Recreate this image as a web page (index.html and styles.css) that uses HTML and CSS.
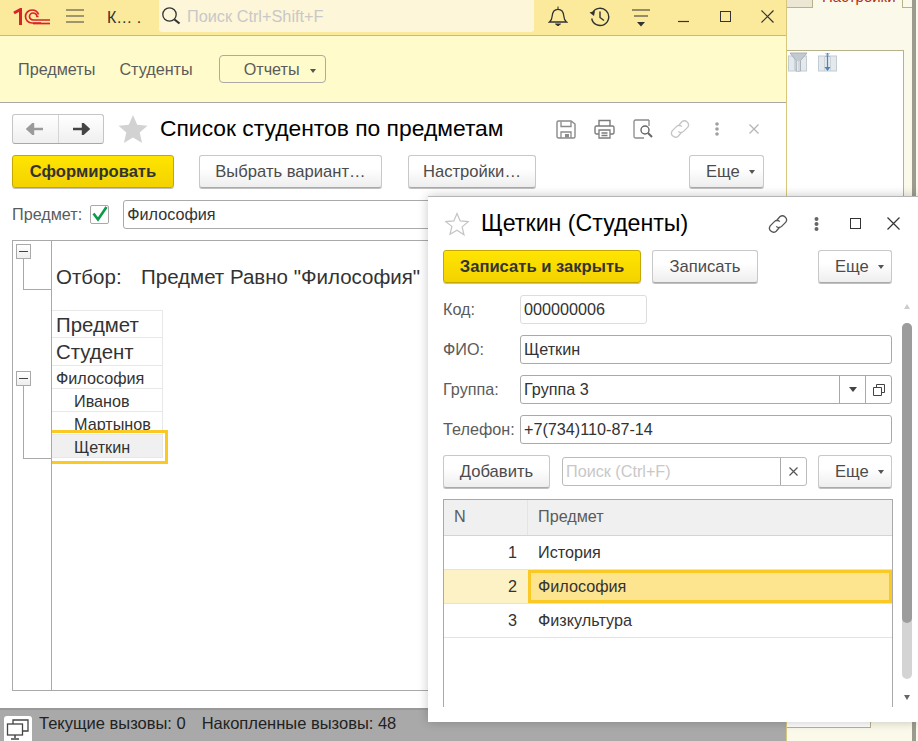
FILE: index.html
```html
<!DOCTYPE html>
<html>
<head>
    <meta charset="utf-8">
    <title>Список студентов по предметам</title>
    <link rel="stylesheet" href="styles.css">
</head>
<body>
    <div class="desk">
        <div class="back-panel">
            <div class="back-tabs">
                <span class="back-tab-old"></span>
                <span class="back-tab"><span class="back-tab-text">Настройки</span></span>
                <span class="back-tab-rest"></span>
            </div>
            <div class="back-box">
                <svg class="back-icon" width="20" height="20" viewBox="0 0 20 20">
                    <rect x="0.5" y="4" width="18" height="15" fill="#e4e9ed" stroke="#c3ccd3"/>
                    <path d="M6.5 4v15M12.5 4v15" stroke="#ccd5dc"/>
                    <path d="M2 1h17l-6.500 7.500V19H8V8.500z" fill="#c2cacf" stroke="#a9b2b8"/>
                    <path d="M9.500 9v10M11 9v10" stroke="#e4e9ed"/>
                </svg>
                <svg class="back-icon" width="20" height="20" viewBox="0 0 20 20">
                    <rect x="0.5" y="4" width="18" height="15" fill="#e4e9ed" stroke="#c3ccd3"/>
                    <path d="M6.5 4v15M12.5 4v15" stroke="#ccd5dc"/>
                    <path d="M9.500 1v16" stroke="#4d83ba" stroke-width="1.200"/>
                    <path d="M6.500 15h6l-3 4z" fill="#4d83ba"/>
                    <path d="M7.500 1l4 4M11.500 1l-4 4" stroke="#7aa3cc"/>
                </svg>
            </div>
            <div class="back-low"></div>
            <div class="back-strip"></div>
        </div>

        <div class="main-window">
            <div class="topbar">
                <svg class="logo" width="38" height="18" viewBox="0 0 38 18">
                    <path d="M1 5l6.500-3.500V17" fill="none" stroke="#d8232a" stroke-width="3"/>
                    <path d="M28 15H19a6.500 6.500 0 1 1 0-13c3.400 0 5.500 1.600 6.500 4.500" fill="none" stroke="#d8232a" stroke-width="1.700"/>
                    <path d="M37 12H20a3.500 3.500 0 1 1 0-7c2 0 3.500 1 4 3.500h1.500" fill="none" stroke="#d8232a" stroke-width="1.700"/>
                    <path d="M20 15.500h17" stroke="#d8232a" stroke-width="1.700"/>
                </svg>
                <svg class="burger" width="18" height="14" viewBox="0 0 18 14">
                    <path d="M0 1h18M0 7h18M0 13h18" stroke="#444" stroke-width="1.200"/>
                </svg>
                <span class="top-title">К… .</span>
                <div class="global-search">
                    <svg width="20" height="20" viewBox="0 0 20 20">
                        <circle cx="8.500" cy="8.500" r="6.700" fill="none" stroke="#333" stroke-width="1.300"/>
                        <path d="M13.500 13.500l5 4" stroke="#333" stroke-width="2.200"/>
                    </svg>
                    <span class="global-search-text">Поиск Ctrl+Shift+F</span>
                </div>
                <div class="top-icons">
                    <svg class="top-icon-bell" width="20" height="20" viewBox="0 0 20 20">
                        <path d="M1.500 16c2-1.500 2.500-3 2.700-6 .3-4 2.300-6.700 5.800-6.700s5.500 2.700 5.800 6.700c.2 3 .7 4.500 2.700 6z" fill="none" stroke="#333" stroke-width="1.300"/>
                        <path d="M10 0.500v3M7.500 18h5l-2.500 1.800z" stroke="#333" fill="#333"/>
                    </svg>
                    <svg class="top-icon-history" width="22" height="20" viewBox="0 0 22 20">
                        <path d="M3.500 6a8.600 8.600 0 1 1-.8 5.500" fill="none" stroke="#333" stroke-width="1.400"/>
                        <path d="M0.500 5.500l5.500-1.500-1 5z" fill="#333"/>
                        <path d="M11 4.500v6l4 3" fill="none" stroke="#333" stroke-width="1.400"/>
                    </svg>
                    <svg class="top-icon-filter" width="20" height="18" viewBox="0 0 20 18">
                        <path d="M1 1h18M3 7h14" stroke="#333" stroke-width="1.200"/>
                        <path d="M6 13h8l-4 4.500z" fill="#333"/>
                    </svg>
                    <svg class="top-icon-min" width="12" height="12" viewBox="0 0 12 12">
                        <path d="M0 10.500h11" stroke="#333" stroke-width="1.200"/>
                    </svg>
                    <span class="top-icon-max"></span>
                    <svg class="top-icon-close" width="13" height="13" viewBox="0 0 13 13">
                        <path d="M.5.500l12 12M12.500.500l-12 12" stroke="#333" stroke-width="1.200"/>
                    </svg>
                </div>
            </div>

            <div class="sections">
                <a class="section-link">Предметы</a>
                <a class="section-link">Студенты</a>
                <div class="section-btn">Отчеты <span class="caret"></span></div>
            </div>

            <div class="form">
                <div class="form-head">
                    <div class="nav-btns">
                        <span class="nav-btn">
                            <svg width="18" height="12" viewBox="0 0 18 12"><path d="M17 6H6M7 1L1.500 6 7 11z" stroke="#9a9a9a" stroke-width="2.400" fill="#9a9a9a"/></svg>
                        </span>
                        <span class="nav-btn">
                            <svg width="18" height="12" viewBox="0 0 18 12"><path d="M1 6h11M11 1l5.500 5L11 11z" stroke="#444" stroke-width="2.400" fill="#444"/></svg>
                        </span>
                    </div>
                    <svg class="fav" width="30" height="30" viewBox="0 0 30 30">
                        <path d="M15 1l4.200 9.800 10.300.9-7.800 6.800 2.400 10.400L15 23.400 5.900 28.900l2.400-10.400L.5 11.700l10.300-.9z" fill="#d2d2d2"/>
                    </svg>
                    <h1 class="form-title">Список студентов по предметам</h1>
                    <div class="form-icons">
                        <svg width="20" height="19" viewBox="0 0 20 19">
                            <path d="M1 2.500A1.500 1.500 0 0 1 2.500 1H15l4 3v12.500a1.500 1.500 0 0 1-1.500 1.500h-15A1.500 1.500 0 0 1 1 16.500z" fill="none" stroke="#8a8a8a" stroke-width="1.400"/>
                            <path d="M5 1.500v5h10v-5M5 18v-6h10v6" fill="none" stroke="#8a8a8a" stroke-width="1.300"/>
                            <rect x="9" y="14" width="4" height="3.500" fill="#8a8a8a"/>
                        </svg>
                        <svg width="21" height="20" viewBox="0 0 21 20">
                            <path d="M5 7V1.500h11V7M5 15H2.500A1.500 1.500 0 0 1 1 13.500V8.500A1.500 1.500 0 0 1 2.500 7h16A1.500 1.500 0 0 1 20 8.500v5a1.500 1.500 0 0 1-1.500 1.500H16" fill="none" stroke="#7c7c7c" stroke-width="1.400"/>
                            <path d="M5 11h11v8H5zM7.500 14h6M7.500 16.500h6" fill="none" stroke="#7c7c7c" stroke-width="1.300"/>
                        </svg>
                        <svg width="20" height="20" viewBox="0 0 20 20">
                            <path d="M16 1H2.500A1.500 1.500 0 0 0 1 2.500v15A1.500 1.500 0 0 0 2.500 19H11" fill="none" stroke="#8a8a8a" stroke-width="1.300"/>
                            <path d="M16 1v6" stroke="#8a8a8a" stroke-width="1.300"/>
                            <circle cx="12" cy="11" r="4" fill="none" stroke="#666" stroke-width="1.400"/>
                            <path d="M15 14l4 4" stroke="#666" stroke-width="2"/>
                        </svg>
                        <svg class="form-icon-link" width="24" height="24" viewBox="0 0 20 20">
                            <path d="M8.500 7.500l3-3.500a3.400 3.400 0 0 1 5 4.500l-3.500 3.500a3.200 3.200 0 0 1-4.500 0M11.500 12.500l-3 3.500a3.400 3.400 0 0 1-5-4.500L7 8a3.200 3.200 0 0 1 4.500 0" fill="none" stroke="#c4c4c4" stroke-width="1.100"/>
                        </svg>
                        <svg class="form-icon-dots" width="4" height="14" viewBox="0 0 4 14">
                            <circle cx="2" cy="2" r="1.800" fill="#a0a0a0"/><circle cx="2" cy="7" r="1.800" fill="#a0a0a0"/><circle cx="2" cy="12" r="1.800" fill="#a0a0a0"/>
                        </svg>
                        <svg class="form-icon-close" width="10" height="10" viewBox="0 0 10 10">
                            <path d="M.5.500l9 9M9.500.500l-9 9" stroke="#b5b5b5" stroke-width="1.300"/>
                        </svg>
                    </div>
                </div>

                <div class="form-bar">
                    <button class="btn btn-main btn-make">Сформировать</button>
                    <button class="btn btn-variant">Выбрать вариант…</button>
                    <button class="btn btn-settings">Настройки…</button>
                    <button class="btn btn-more">Еще <span class="caret"></span></button>
                </div>

                <div class="filter-row">
                    <span class="label">Предмет:</span>
                    <span class="check">
                        <svg width="17" height="17" viewBox="0 0 17 17"><path d="M2.500 7.500l4.500 6L15.500 1" fill="none" stroke="#0d9a4d" stroke-width="2.600"/></svg>
                    </span>
                    <span class="input filter-input">Философия</span>
                </div>

                <div class="report">
                    <div class="tree">
                        <span class="tree-box tree-box-a"></span>
                        <span class="tree-line tree-line-a"></span>
                        <span class="tree-box tree-box-b"></span>
                        <span class="tree-line tree-line-b"></span>
                    </div>
                    <div class="sheet">
                        <div class="sheet-filter"><span class="sheet-filter-name">Отбор:</span>Предмет Равно "Философия"</div>
                        <div class="sheet-table">
                            <div class="cell cell-head">Предмет</div>
                            <div class="cell cell-head">Студент</div>
                            <div class="cell">Философия</div>
                            <div class="cell cell-sub">Иванов</div>
                            <div class="cell cell-sub">Мартынов</div>
                            <div class="cell cell-sub cell-current">Щеткин</div>
                            <span class="cell-frame"></span>
                        </div>
                    </div>
                </div>
            </div>
        </div>

        <div class="status">
            <span class="status-btn">
                <svg width="24" height="22" viewBox="0 0 24 22">
                    <path d="M7 6V2h15v11h-5" fill="none" stroke="#444" stroke-width="1.300"/>
                    <rect x="1.500" y="6" width="15" height="11" fill="#fff" stroke="#444" stroke-width="1.300"/>
                    <path d="M9 17v3M5 21h8" stroke="#444" stroke-width="1.500"/>
                </svg>
            </span>
            <span class="status-text">Текущие вызовы: 0</span>
            <span class="status-text">Накопленные вызовы: 48</span>
        </div>

        <div class="modal">
            <div class="modal-head">
                <svg class="modal-star" width="24" height="24" viewBox="0 0 24 24">
                    <path d="M12 1.500l3.200 7.400 8 .7-6.100 5.300 1.900 7.900L12 18.200l-7 4.100 1.900-7.900L.8 9.600l8-.7z" fill="none" stroke="#c4c4c4" stroke-width="1.200"/>
                </svg>
                <h2 class="modal-title">Щеткин (Студенты)</h2>
                <div class="modal-icons">
                    <svg width="24" height="24" viewBox="0 0 20 20">
                        <path d="M8.500 7.500l3-3.500a3.400 3.400 0 0 1 5 4.500l-3.500 3.500a3.200 3.200 0 0 1-4.500 0M11.500 12.500l-3 3.500a3.400 3.400 0 0 1-5-4.500L7 8a3.200 3.200 0 0 1 4.500 0" fill="none" stroke="#555" stroke-width="1.100"/>
                    </svg>
                    <svg width="5" height="14" viewBox="0 0 5 14">
                        <circle cx="2.500" cy="2" r="2" fill="#666"/><circle cx="2.500" cy="7" r="2" fill="#666"/><circle cx="2.500" cy="12" r="2" fill="#666"/>
                    </svg>
                    <span class="modal-max"></span>
                    <svg width="13" height="13" viewBox="0 0 13 13">
                        <path d="M.5.500l12 12M12.500.500l-12 12" stroke="#333" stroke-width="1.200"/>
                    </svg>
                </div>
            </div>

            <div class="modal-bar">
                <button class="btn btn-main btn-save-close">Записать и закрыть</button>
                <button class="btn btn-save">Записать</button>
                <button class="btn btn-more">Еще <span class="caret"></span></button>
            </div>

            <div class="fields">
                <span class="label">Код:</span>
                <span class="input input-code">000000006</span>
                <span class="label">ФИО:</span>
                <span class="input">Щеткин</span>
                <span class="label">Группа:</span>
                <div class="input input-group">
                    <span class="input-group-text">Группа 3</span>
                    <span class="input-addon"><span class="caret caret-dark"></span></span>
                    <span class="input-addon">
                        <svg width="12" height="12" viewBox="0 0 12 12"><path d="M3.500 3.500V.5h8v8h-3M.5 3.500h8v8h-8z" fill="none" stroke="#444"/></svg>
                    </span>
                </div>
                <span class="label">Телефон:</span>
                <span class="input">+7(734)110-87-14</span>
            </div>

            <div class="table-bar">
                <button class="btn btn-add">Добавить</button>
                <div class="input table-search">
                    <span class="table-search-text">Поиск (Ctrl+F)</span>
                    <span class="input-addon table-search-clear">
                        <svg width="9" height="9" viewBox="0 0 9 9"><path d="M.5.500l8 8M8.500.500l-8 8" stroke="#555" stroke-width="1.200"/></svg>
                    </span>
                </div>
                <button class="btn btn-more">Еще <span class="caret"></span></button>
            </div>

            <div class="grid">
                <div class="grid-row grid-head">
                    <div class="grid-n">N</div>
                    <div class="grid-name">Предмет</div>
                </div>
                <div class="grid-row">
                    <div class="grid-n grid-num">1</div>
                    <div class="grid-name">История</div>
                </div>
                <div class="grid-row grid-row-current">
                    <div class="grid-n grid-num">2</div>
                    <div class="grid-name">Философия</div>
                </div>
                <div class="grid-row">
                    <div class="grid-n grid-num">3</div>
                    <div class="grid-name">Физкультура</div>
                </div>
            </div>

            <div class="scroll">
                <span class="scroll-up"></span>
                <div class="scroll-track"><div class="scroll-thumb"></div></div>
                <span class="scroll-down"></span>
            </div>
        </div>
    </div>
</body>
</html>
```

FILE: styles.css
```css
* {
    box-sizing: border-box;
}
html, body {
    margin: 0;
    height: 100%;
}
body {
    font-family: "Liberation Sans", Arial, sans-serif;
    font-size: 16.2px;
    color: #4b4b4b;
    overflow: hidden;
}
svg {
    flex: none;
}
.desk {
    position: relative;
    width: 918px;
    height: 741px;
    overflow: hidden;
    background: #fbf9ea;
}

/* window behind, only its right edge is seen */
.back-panel {
    position: absolute;
    left: 786px;
    top: 0;
    width: 132px;
    height: 741px;
    border-left: 1px solid #d8c87e;
}
.back-tabs {
    display: flex;
    height: 8px;
}
.back-tab-old {
    width: 25px;
    background: #ece7d5;
    border-bottom: 1px solid #b7b28a;
}
.back-tab {
    width: 91px;
    padding-left: 9px;
    border-left: 1px solid #b7b28a;
    border-right: 1px solid #b7b28a;
    color: #b03020;
    font-size: 15px;
    white-space: nowrap;
}
.back-tab-text {
    display: block;
    margin-top: -10px;
    line-height: 14px;
}
.back-tab-rest {
    width: 9px;
    border-bottom: 1px solid #b7b28a;
}
.back-box {
    display: flex;
    gap: 10px;
    width: 117px;
    height: 160px;
    margin-top: 42px;
    padding: 1px 0 0 1px;
    background: #fff;
    border: 1px solid #b7b28a;
    border-left: 0;
}
.back-icon {
    display: block;
}
.back-low {
    width: 84px;
    height: 28px;
    margin-top: 490px;
    background: #fff;
    border: 1px solid #b7b28a;
    border-left: 0;
}
.back-strip {
    position: absolute;
    left: 125px;
    top: 0;
    width: 4px;
    height: 741px;
    background: #9b9b90;
}

.main-window {
    position: absolute;
    left: 0;
    top: 0;
    width: 786px;
    height: 708px;
    display: flex;
    flex-direction: column;
    background: #fff;
}

.topbar {
    position: relative;
    display: flex;
    align-items: flex-start;
    height: 36px;
    flex: none;
    background: #fbe99c;
    border-bottom: 1px solid #c9bb73;
}
.logo {
    margin: 8px 0 0 13px;
}
.burger {
    margin: 9px 0 0 15px;
}
.top-title {
    width: 52px;
    margin: 8px 0 0 23px;
    font-size: 16px;
    color: #333;
    line-height: 19px;
    white-space: pre;
}
.global-search {
    display: flex;
    align-items: center;
    gap: 6px;
    width: 375px;
    height: 32px;
    padding-left: 2px;
    background: #fdf6d9;
    border-radius: 0 0 3px 3px;
}
.global-search-text {
    color: #c8c8c8;
    font-size: 16.3px;
}
.top-icons {
    position: relative;
    flex: 1;
    height: 35px;
}
.top-icons > * {
    position: absolute;
}
.top-icon-bell { left: 14px; top: 6px; }
.top-icon-history { left: 55px; top: 7px; }
.top-icon-filter { left: 97px; top: 9px; }
.top-icon-min { left: 144px; top: 11px; }
.top-icon-max {
    left: 186px;
    top: 11px;
    width: 11px;
    height: 11px;
    border: 1px solid #333;
}
.top-icon-close { left: 227px; top: 10px; }

.sections {
    display: flex;
    align-items: center;
    height: 67px;
    flex: none;
    padding-left: 18px;
    background: #fffbcb;
    border-bottom: 1px solid #a9a9a9;
}
.section-link {
    margin-right: 24px;
    color: #5b5b5b;
}
.section-btn {
    width: 107px;
    height: 28px;
    margin-left: 2px;
    padding-left: 24px;
    line-height: 26px;
    border: 1px solid #aaa;
    border-radius: 4px;
    color: #5b5b5b;
    white-space: nowrap;
}
.caret {
    display: inline-block;
    margin-left: 6px;
    vertical-align: middle;
    border-left: 3.5px solid transparent;
    border-right: 3.5px solid transparent;
    border-top: 4px solid #555;
}
.caret-dark {
    margin: 0;
    border-left-width: 4px;
    border-right-width: 4px;
    border-top-width: 5px;
    border-top-color: #444;
}

.form {
    position: relative;
    flex: 1;
    padding: 11px 22px 0 12px;
}
.form-head {
    display: flex;
    align-items: center;
    height: 30px;
}
.nav-btns {
    display: flex;
    width: 92px;
    height: 30px;
    flex: none;
    border: 1px solid #c5c5c5;
    border-bottom-color: #a8a8a8;
    border-radius: 3px;
    background: linear-gradient(#fff, #efefef);
}
.nav-btn {
    display: flex;
    align-items: center;
    justify-content: center;
    flex: 1;
}
.nav-btn + .nav-btn {
    border-left: 1px solid #d5d5d5;
}
.fav {
    margin-left: 14px;
}
.form-title {
    margin: 0 0 2px 12px;
    color: #000;
    font-size: 22.85px;
    font-weight: normal;
    white-space: nowrap;
}
.form-icons {
    display: flex;
    align-items: center;
    gap: 18px;
    margin-left: 52px;
}
.form-icon-link {
    margin-left: -3px;
}
.form-icon-dots {
    margin-left: 5px;
}
.form-icon-close {
    margin-left: 12px;
}

.btn {
    display: inline-block;
    height: 33px;
    padding: 0;
    font-family: inherit;
    font-size: 16.6px;
    color: #4b4b4b;
    border: 1px solid #c8c8c8;
    border-bottom-color: #aaa;
    border-radius: 3px;
    background: linear-gradient(#fff 40%, #eee);
    box-shadow: 0 1px 0 #c0c0c0;
    white-space: nowrap;
}
.btn-main {
    font-weight: bold;
    color: #333;
    border-color: #c4a800;
    background: linear-gradient(#ffe500, #f3d200);
}
.form-bar {
    display: flex;
    margin-top: 11px;
}
.btn-make { width: 162px; }
.btn-variant { width: 183px; margin-left: 25px; }
.btn-settings { width: 128px; margin-left: 26px; }
.btn-more {
    width: 75px;
    margin-left: auto;
    padding-left: 16px;
    text-align: left;
}
.btn-more .caret {
    margin-left: 5px;
}

.filter-row {
    display: flex;
    align-items: center;
    height: 29px;
    margin-top: 12px;
}
.label {
    color: #5b5b5b;
    white-space: nowrap;
}
.check {
    display: flex;
    align-items: center;
    justify-content: center;
    width: 19px;
    height: 19px;
    margin-left: 8px;
    border: 1px solid #a9a9a9;
    border-radius: 2px;
}
.input {
    display: block;
    height: 29px;
    padding-left: 3px;
    line-height: 27px;
    color: #333;
    background: #fff;
    border: 1px solid #a9a9a9;
    border-radius: 3px;
}
.filter-input {
    flex: 1;
    margin-left: 14px;
}

.report {
    display: flex;
    height: 451px;
    margin-top: 11px;
    border: 1px solid #a9a9a9;
}
.tree {
    position: relative;
    width: 39px;
    flex: none;
    border-right: 1px solid #a9a9a9;
}
.tree-box {
    position: absolute;
    left: 3px;
    width: 15px;
    height: 15px;
    border: 1px solid #a9a9a9;
    background: linear-gradient(#fff, #eee);
}
.tree-box::after {
    content: "";
    position: absolute;
    left: 2px;
    right: 2px;
    top: 6px;
    height: 1px;
    background: #444;
}
.tree-box-a { top: 3px; }
.tree-box-b { top: 130px; }
.tree-line {
    position: absolute;
    left: 10px;
    width: 28px;
    border-left: 1px solid #a9a9a9;
    border-bottom: 1px solid #a9a9a9;
}
.tree-line-a { top: 18px; height: 31px; }
.tree-line-b { top: 145px; height: 73px; }

.sheet {
    flex: 1;
}
.sheet-filter {
    height: 69px;
    padding: 24px 0 0 4px;
    font-size: 20.5px;
    color: #333;
    white-space: nowrap;
}
.sheet-filter-name {
    display: inline-block;
    width: 85px;
}
.sheet-table {
    position: relative;
    width: 111px;
}
.cell {
    height: 23px;
    padding-left: 4px;
    line-height: 24px;
    color: #333;
    border: 1px solid #e8e8e8;
    border-top: 0;
    border-left: 0;
    white-space: nowrap;
    overflow: hidden;
}
.cell-head {
    height: 28px;
    line-height: 29px;
    font-size: 20.4px;
}
.cell-head:first-child {
    border-top: 1px solid #e8e8e8;
}
.cell-sub {
    padding-left: 22px;
}
.cell-current {
    background: #f0f0f0;
}
.cell-frame {
    position: absolute;
    left: 0;
    top: 120px;
    width: 116px;
    height: 34px;
    border: 3px solid #fbc925;
    border-left: 0;
}

.status {
    position: absolute;
    left: 0;
    top: 708px;
    width: 786px;
    height: 33px;
    display: flex;
    gap: 16px;
    padding-left: 4px;
    background: #a9a9a9;
    border-top: 2px solid #999;
}
.status-btn {
    display: flex;
    justify-content: center;
    width: 28px;
    height: 29px;
    margin: 6px -9px 0 0;
    padding-top: 2px;
    background: #fff;
    border-radius: 3px;
}
.status-text {
    color: #222;
    font-size: 16.5px;
    line-height: 27px;
    white-space: nowrap;
}

/* second window on top */
.modal {
    position: absolute;
    left: 428px;
    top: 196px;
    width: 490px;
    height: 526px;
    padding: 0 25px 0 15px;
    background: #fff;
    border-top: 1px solid #b5b5b5;
    box-shadow: 0 0 10px rgba(0,0,0,0.22);
}
.modal-head {
    display: flex;
    align-items: center;
    height: 53px;
}
.modal-star {
    margin-left: 2px;
}
.modal-title {
    margin: 0 0 0 12px;
    color: #000;
    font-size: 23.2px;
    font-weight: normal;
    white-space: nowrap;
}
.modal-icons {
    display: flex;
    align-items: center;
    gap: 24px;
    margin-left: 78px;
}
.modal-max {
    width: 11px;
    height: 11px;
    margin: 0 2px 0 7px;
    border: 1px solid #333;
}
.modal-bar {
    display: flex;
    width: 449px;
}
.btn-save-close { width: 198px; }
.btn-save { width: 106px; margin-left: 11px; }
.modal-bar .btn-more,
.table-bar .btn-more {
    width: 74px;
}

.fields {
    display: grid;
    grid-template-columns: 77px 372px;
    row-gap: 11px;
    align-items: center;
    margin-top: 12px;
}
.input-code {
    width: 127px;
    border-color: #ddd;
}
.input-group {
    display: flex;
    padding: 0;
}
.input-group-text {
    flex: 1;
    padding-left: 3px;
}
.input-addon {
    display: flex;
    align-items: center;
    justify-content: center;
    width: 26px;
    flex: none;
    border-left: 1px solid #a9a9a9;
}

.table-bar {
    display: flex;
    align-items: center;
    width: 449px;
    margin-top: 11px;
}
.btn-add { width: 107px; }
.table-search {
    display: flex;
    width: 245px;
    margin-left: 12px;
    padding: 0;
    border-color: #bbb;
}
.table-search-text {
    flex: 1;
    padding-left: 3px;
    color: #c8c8c8;
    white-space: nowrap;
}

.grid {
    width: 450px;
    height: 208px;
    margin-top: 11px;
    border: 1px solid #a9a9a9;
    border-bottom: 0;
}
.grid-row {
    display: flex;
    height: 34px;
    line-height: 32px;
    color: #333;
    border-bottom: 1px solid #e3e3e3;
}
.grid-head {
    height: 36px;
    line-height: 33px;
    color: #5b5b5b;
    background: #f0f0f0;
    border-bottom-color: #d5d5d5;
}
.grid-n {
    width: 84px;
    padding-left: 10px;
    flex: none;
}
.grid-head .grid-n {
    border-right: 1px solid #e4e4e4;
}
.grid-num {
    padding: 0 11px 0 0;
    text-align: right;
}
.grid-name {
    flex: 1;
    padding-left: 10px;
}
.grid-row-current .grid-n {
    background: #fdf2c5;
}
.grid-row-current .grid-name {
    padding-left: 7px;
    line-height: 26px;
    background: #fde48f;
    border: 3px solid #fbc925;
}

.scroll {
    position: absolute;
    left: 474px;
    top: 107px;
    width: 10px;
    height: 396px;
}
.scroll-up,
.scroll-down {
    position: absolute;
    left: 2px;
    border-left: 3px solid transparent;
    border-right: 3px solid transparent;
}
.scroll-up {
    top: 0;
    border-bottom: 5px solid #ccc;
}
.scroll-down {
    bottom: 0;
    border-top: 5px solid #666;
}
.scroll-track {
    position: absolute;
    left: 0;
    top: 19px;
    width: 10px;
    height: 356px;
    background: #d4d4d4;
    border-radius: 5px;
}
.scroll-thumb {
    height: 300px;
    background: #9c9c9c;
    border-radius: 5px;
}
```
